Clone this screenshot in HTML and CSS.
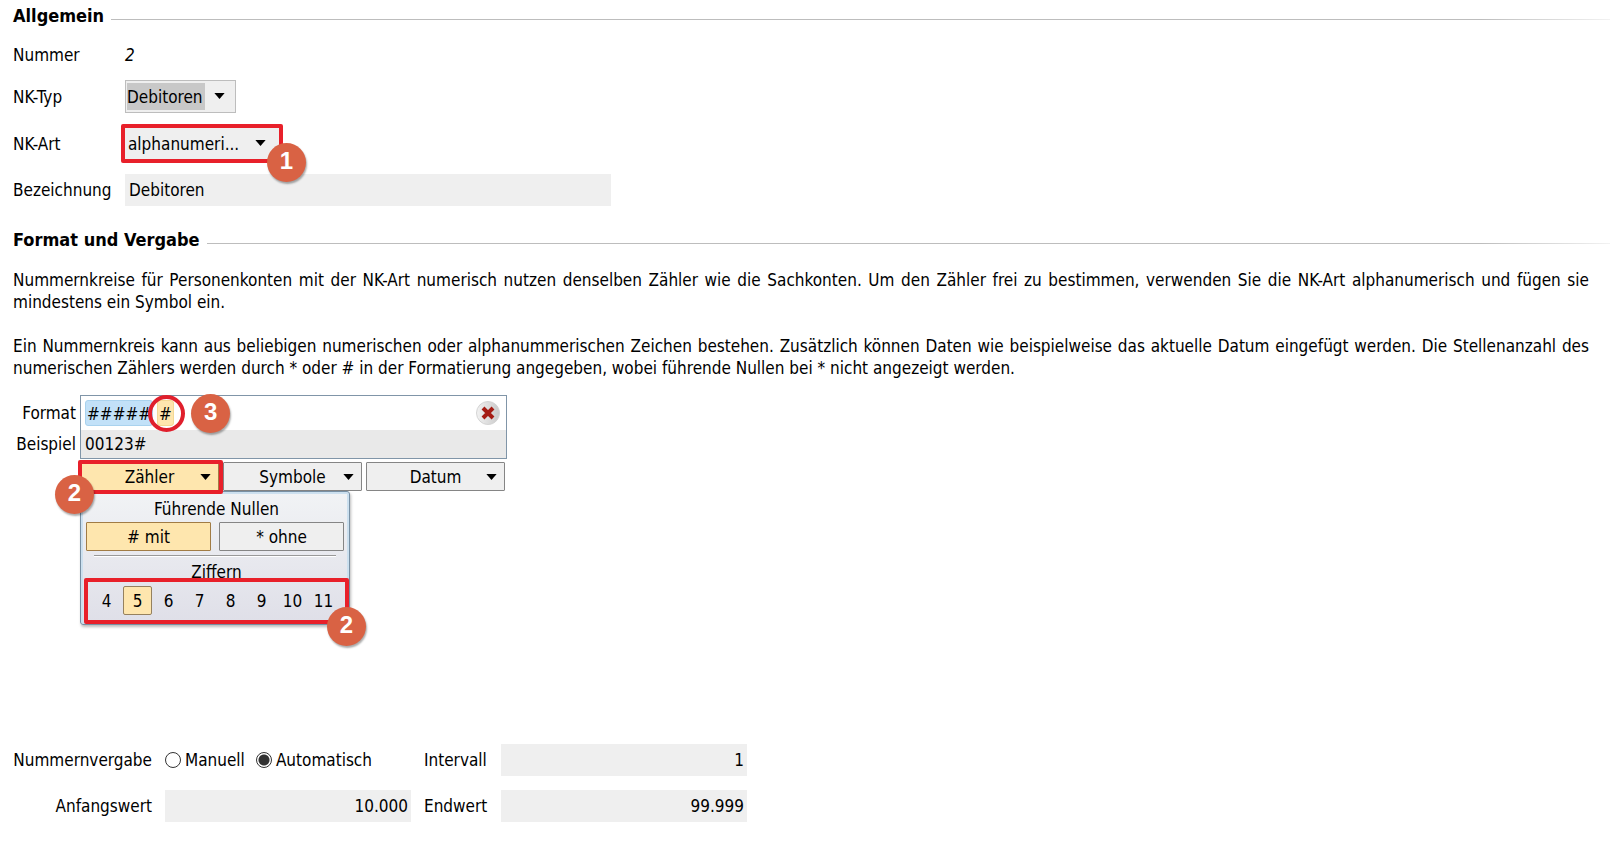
FILE: index.html
```html
<!DOCTYPE html>
<html lang="de">
<head>
<meta charset="utf-8">
<meta name="viewport" content="width=device-width, initial-scale=1">
<title>Nummernkreis</title>
<link rel="stylesheet" href="styles.css">
</head>
<body>
<main class="page">
  <section>
    <h2 class="heading">Allgemein</h2>
    <div class="general">
      <span class="general-label">Nummer</span>
      <em class="number">2</em>
      <label class="general-label" for="typ">NK-Typ</label>
      <div class="picker picker-typ">
        <select id="typ"><option>Debitoren</option></select>
        <svg class="arrow" viewBox="0 0 12 7" aria-hidden="true"><path d="M0 0h12L6 7z"/></svg>
      </div>
      <label class="general-label" for="art">NK-Art</label>
      <div class="picker picker-art">
        <select id="art"><option>alphanumeri...</option></select>
        <svg class="arrow" viewBox="0 0 12 7" aria-hidden="true"><path d="M0 0h12L6 7z"/></svg>
        <span class="badge badge-art">1</span>
      </div>
      <label class="general-label" for="bez">Bezeichnung</label>
      <input class="field" id="bez" type="text" value="Debitoren">
    </div>
  </section>

  <section>
    <h2 class="heading">Format und Vergabe</h2>
    <div class="prose">
      <p>Nummernkreise für Personenkonten mit der NK-Art numerisch nutzen denselben Zähler wie die Sachkonten. Um den Zähler frei zu bestimmen, verwenden Sie die NK-Art alphanumerisch und fügen sie mindestens ein Symbol ein.</p>
      <p>Ein Nummernkreis kann aus beliebigen numerischen oder alphanummerischen Zeichen bestehen. Zusätzlich können Daten wie beispielweise das aktuelle Datum eingefügt werden. Die Stellenanzahl des numerischen Zählers werden durch * oder # in der Formatierung angegeben, wobei führende Nullen bei * nicht angezeigt werden.</p>
    </div>

    <div class="format">
      <div class="format-labels">
        <span>Format</span>
        <span>Beispiel</span>
      </div>
      <div class="editor">
        <div class="format-box">
          <div class="tokens">
            <span class="token token-counter">#####</span>
            <span class="token token-symbol">#<span class="ring"></span><span class="badge badge-token">3</span></span>
            <button class="clear" type="button" aria-label="Format löschen">
              <svg viewBox="0 0 24 24" aria-hidden="true">
                <defs><linearGradient id="disc" x1="0" x2="1"><stop offset="0" stop-color="#f2f2f2"/><stop offset="1" stop-color="#c9c9c9"/></linearGradient></defs>
                <circle cx="12" cy="12" r="11.5" fill="url(#disc)" stroke="#d4d4d4"/>
                <path d="M7 7l10 10M17 7L7 17" stroke="#a51c14" stroke-width="4"/>
              </svg>
            </button>
          </div>
          <output class="example">00123#</output>
        </div>
        <div class="menus">
          <div class="menu">
            <button class="menu-button active" type="button">Zähler<svg class="arrow" viewBox="0 0 12 7" aria-hidden="true"><path d="M0 0h12L6 7z"/></svg></button>
            <div class="popup">
              <div class="popup-title">Führende Nullen</div>
              <div class="zeros">
                <button class="active" type="button"># mit</button>
                <button type="button">* ohne</button>
              </div>
              <hr class="rule">
              <div class="popup-title">Ziffern</div>
              <div class="digits">
                <button type="button">4</button>
                <button class="active" type="button">5</button>
                <button type="button">6</button>
                <button type="button">7</button>
                <button type="button">8</button>
                <button type="button">9</button>
                <button type="button">10</button>
                <button type="button">11</button>
                <span class="frame frame-digits"></span>
                <span class="badge badge-digits">2</span>
              </div>
            </div>
            <span class="frame frame-menu"></span>
            <span class="badge badge-menu">2</span>
          </div>
          <div class="menu">
            <button class="menu-button" type="button">Symbole<svg class="arrow" viewBox="0 0 12 7" aria-hidden="true"><path d="M0 0h12L6 7z"/></svg></button>
          </div>
          <div class="menu">
            <button class="menu-button" type="button">Datum<svg class="arrow" viewBox="0 0 12 7" aria-hidden="true"><path d="M0 0h12L6 7z"/></svg></button>
          </div>
        </div>
      </div>
    </div>

    <div class="allocation">
      <span class="right">Nummernvergabe</span>
      <div class="radios">
        <label><input type="radio" name="vergabe">Manuell</label>
        <label><input type="radio" name="vergabe" checked>Automatisch</label>
      </div>
      <label for="intervall">Intervall</label>
      <input class="field amount" id="intervall" type="text" value="1">
      <label class="right" for="start">Anfangswert</label>
      <input class="field amount" id="start" type="text" value="10.000">
      <label for="ende">Endwert</label>
      <input class="field amount" id="ende" type="text" value="99.999">
    </div>
  </section>
</main>
</body>
</html>
```
FILE: styles.css
```css
* { box-sizing: border-box; }

body {
  margin: 0;
  background: #fff;
  color: #000;
  font: 17px/22px "DejaVu Sans Condensed", "DejaVu Sans", sans-serif;
}

button, input, select { font: inherit; color: inherit; border-radius: 0; }
button { padding: 0; }

.page { padding: 5px 0 24px 13px; }

.heading {
  display: flex;
  align-items: center;
  gap: 7px;
  margin: 0;
  font-size: 18px;
  line-height: 22px;
}

.heading::after {
  content: "";
  flex: 1;
  height: 1px;
  margin-top: 6px;
  background: linear-gradient(to right, #bdbdbd calc(100% - 130px), #f2f2f2);
}

.general {
  display: grid;
  grid-template-columns: 112px 1fr;
  grid-template-rows: 28px 33px 39px 32px;
  row-gap: 11px;
  align-items: center;
  padding: 14px 0 23px;
}

.number { font-style: oblique; }

.picker {
  position: relative;
  display: flex;
  justify-self: start;
}

.picker select {
  appearance: none;
  width: 100%;
  height: 33px;
  padding: 2px 1px;
  border: 1px solid #bdbdbd;
  background: #efefef;
}

.picker-typ { width: 111px; }
.picker-typ select {
  padding-right: 30px;
  background: linear-gradient(#c8c8c8, #c8c8c8) content-box, #efefef;
}

.picker-art { width: 162px; margin-left: -4px; }
.picker-art select {
  height: 39px;
  padding-left: 3px;
  border: 4px solid #e8202a;
  border-radius: 2px;
}

.arrow { width: 11px; height: 6px; }
.picker .arrow {
  position: absolute;
  top: 50%;
  right: 11px;
  margin-top: -4px;
  pointer-events: none;
}
.picker-art .arrow { right: 17px; }

.field {
  width: 486px;
  height: 32px;
  padding: 0 4px;
  border: 0;
  background: #efefef;
}

.badge {
  position: absolute;
  z-index: 3;
  width: 39px;
  height: 39px;
  border-radius: 50%;
  background: #d96244;
  box-shadow: 1px 2px 2px #0005;
  color: #fff;
  font: bold 24px/36px "Liberation Sans", Arial, sans-serif;
  text-align: center;
}
.badge-art { left: 146px; top: 19px; }
.badge-token { left: 33px; top: -7px; }
.badge-menu { left: -25px; top: 13px; }
.badge-digits { right: -18px; bottom: -22px; }

.frame {
  position: absolute;
  z-index: 2;
  border: 4px solid #e8202a;
  border-radius: 2px;
  pointer-events: none;
}
.frame-menu { inset: -2px -4px -3px -2px; }
.frame-digits { inset: 0 -1px; }

.prose { padding: 18px 21px 16px 0; text-align: justify; }
.prose p { margin: 0; }
.prose p + p { margin-top: 22px; }

.format {
  display: grid;
  grid-template-columns: 63px 427px;
  gap: 4px;
}

.format-labels {
  display: grid;
  grid-template-rows: 36px 26px;
  align-content: start;
  align-items: center;
  justify-items: end;
}

.format-box {
  border: 1px solid #8095a8;
  background: #fff;
}

.tokens {
  display: flex;
  align-items: center;
  gap: 4px;
  height: 34px;
  padding: 0 6px 0 4px;
}

.token {
  position: relative;
  height: 26px;
  padding: 0 1px;
  border: 1px solid;
  border-radius: 3px;
  line-height: 26px;
}
.token-counter { border-color: #a9d2ee; background: #c2e1f8; }
.token-symbol { border-color: #f3d995; background: #fee6ae; }

.ring {
  position: absolute;
  left: -10px;
  top: -6px;
  z-index: 2;
  width: 37px;
  height: 37px;
  border: 4px solid #e01f2c;
  border-radius: 50%;
}

.clear {
  width: 24px;
  height: 24px;
  margin-left: auto;
  border: 0;
  background: none;
}
.clear svg { display: block; }

.example {
  display: block;
  height: 28px;
  padding: 0 4px;
  background: #e9e9e9;
  line-height: 28px;
}

.menus {
  display: grid;
  grid-template-columns: repeat(3, 139px);
  gap: 4px;
  margin-top: 3px;
}

.menu { position: relative; }

.menu-button {
  position: relative;
  display: block;
  width: 100%;
  height: 29px;
  border: 1px solid #858585;
  border-radius: 1px;
  background: #efefef;
}
.menu-button .arrow { position: absolute; right: 7px; top: 11px; }

button.active { border-color: #a17c45; background: #fee6ae; }

.popup {
  position: absolute;
  left: 0;
  top: 29px;
  z-index: 1;
  width: 270px;
  padding: 6px 1px 0 4px;
  border: 1px solid #7890a4;
  border-radius: 3px;
  background: linear-gradient(#f1f3f5, #dfdfe8);
  box-shadow: inset 0 0 0 2px #cce0ef, 1px 2px 3px #0004;
}

.popup-title { text-align: center; }

.zeros {
  display: grid;
  grid-template-columns: 1fr 1fr;
  gap: 8px;
  padding: 2px 4px 0 1px;
}
.zeros button {
  height: 29px;
  border: 1px solid #858585;
  border-radius: 1px;
  background: #efefef;
}
.zeros .active { border-color: #a17c45; background: #fee6ae; }

.rule {
  height: 2px;
  margin: 4px 12px 4px 9px;
  border: 0;
  border-top: 1px solid #999;
  background: #fff;
}

.digits {
  position: relative;
  display: grid;
  grid-template-columns: repeat(8, 29px);
  gap: 2px;
  height: 46px;
  margin-top: -5px;
  padding: 8px 0 0 7px;
}
.digits button {
  height: 29px;
  border: 1px solid transparent;
  border-radius: 2px;
  background: none;
}
.digits .active { border-color: #95815e; background: #fee6ae; }

.allocation {
  display: grid;
  grid-template-columns: 139px 246px 64px 246px;
  grid-template-rows: 32px 32px;
  column-gap: 13px;
  row-gap: 14px;
  align-items: center;
  padding-top: 253px;
}
.right { text-align: right; }
.allocation .field { width: 100%; }
.allocation .amount { padding-right: 3px; text-align: right; }

.radios { display: flex; gap: 11px; }
.radios label { display: flex; align-items: center; gap: 4px; }
.radios input {
  appearance: none;
  width: 16px;
  height: 16px;
  margin: 0;
  border: 1px solid #333;
  border-radius: 50%;
}
.radios input:checked { background: radial-gradient(#333 0 5px, #fff 6px); }
```
